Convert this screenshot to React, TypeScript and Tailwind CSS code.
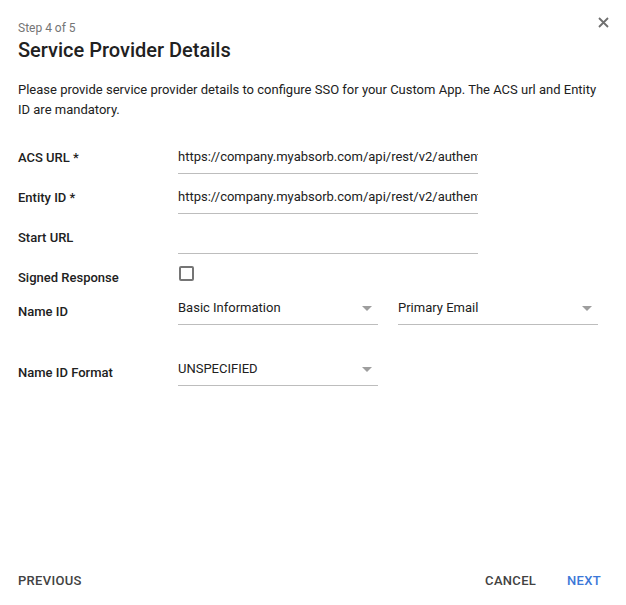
const Caret = () => (
  <svg width="10" height="5" viewBox="0 0 10 5" className="shrink-0">
    <path d="M0 0h10L5 5z" fill="#9e9e9e" />
  </svg>
);

const Select = ({ value, w }: { value: string; w: string }) => (
  <div className={`${w} h-[30px] border-b border-[#bdbdbd] flex items-start justify-between pr-[6px] pt-[3px]`}>
    <span className="text-[13px] text-[#212121]">{value}</span>
    <span className="mt-[8px]"><Caret /></span>
  </div>
);

const TextField = ({ value }: { value: string }) => (
  <div className="w-[300px] h-[33px] border-b border-[#bdbdbd] overflow-hidden whitespace-nowrap pt-[6px] text-[13px] text-[#212121]">
    {value}
  </div>
);

export default function App() {
  const url = "https://company.myabsorb.com/api/rest/v2/authentication/saml";
  return (
    <div className="w-[626px] h-[605px] bg-white flex flex-col relative" style={{ fontFamily: "Roboto, sans-serif" }}>
      <button className="absolute right-[17px] top-[17px] text-[#757575]">
        <svg width="11" height="11" viewBox="0 0 11 11">
          <path d="M1 1l9 9M10 1l-9 9" stroke="#6f6f6f" strokeWidth="1.8" />
        </svg>
      </button>
      <div className="px-[18px] pt-[20px]">
        <div className="text-[12px] text-[#757575] leading-[16px]">Step 4 of 5</div>
        <h1 className="text-[20px] font-medium text-[#212121] leading-[28px]">Service Provider Details</h1>
        <p className="text-[13px] text-[#212121] leading-[20px] mt-[16px]">
          Please provide service provider details to configure SSO for your Custom App. The ACS url and Entity ID are mandatory.
        </p>
        <div className="mt-[21px] flex flex-col text-[13px]">
          <div className="flex h-[40px]">
            <div className="w-[160px] font-medium text-[#212121] pt-[7px]">ACS URL *</div>
            <TextField value={url} />
          </div>
          <div className="flex h-[40px]">
            <div className="w-[160px] font-medium text-[#212121] pt-[7px]">Entity ID *</div>
            <TextField value={url} />
          </div>
          <div className="flex h-[40px]">
            <div className="w-[160px] font-medium text-[#212121] pt-[7px]">Start URL</div>
            <TextField value="" />
          </div>
          <div className="flex h-[34px] items-start">
            <div className="w-[160px] font-medium text-[#212121] pt-[7px]">Signed Response</div>
            <div className="w-[15px] h-[15px] border-2 border-[#757575] rounded-[2px] mt-[5px] ml-[1px]" />
          </div>
          <div className="flex h-[61px] items-start">
            <div className="w-[160px] font-medium text-[#212121] pt-[7px]">Name ID</div>
            <Select value="Basic Information" w="w-[200px]" />
            <div className="w-[20px]" />
            <Select value="Primary Email" w="w-[200px]" />
          </div>
          <div className="flex items-start">
            <div className="w-[160px] font-medium text-[#212121] pt-[7px]">Name ID Format</div>
            <Select value="UNSPECIFIED" w="w-[200px]" />
          </div>
        </div>
      </div>
      <div className="mt-auto flex items-center px-[18px] pb-[15px] text-[13px] font-medium tracking-[0.3px]">
        <button className="text-[#424242]">PREVIOUS</button>
        <div className="flex-1" />
        <button className="text-[#424242] mr-[31px]">CANCEL</button>
        <button className="text-[#3c78d8] mr-[7px]">NEXT</button>
      </div>
    </div>
  );
}
